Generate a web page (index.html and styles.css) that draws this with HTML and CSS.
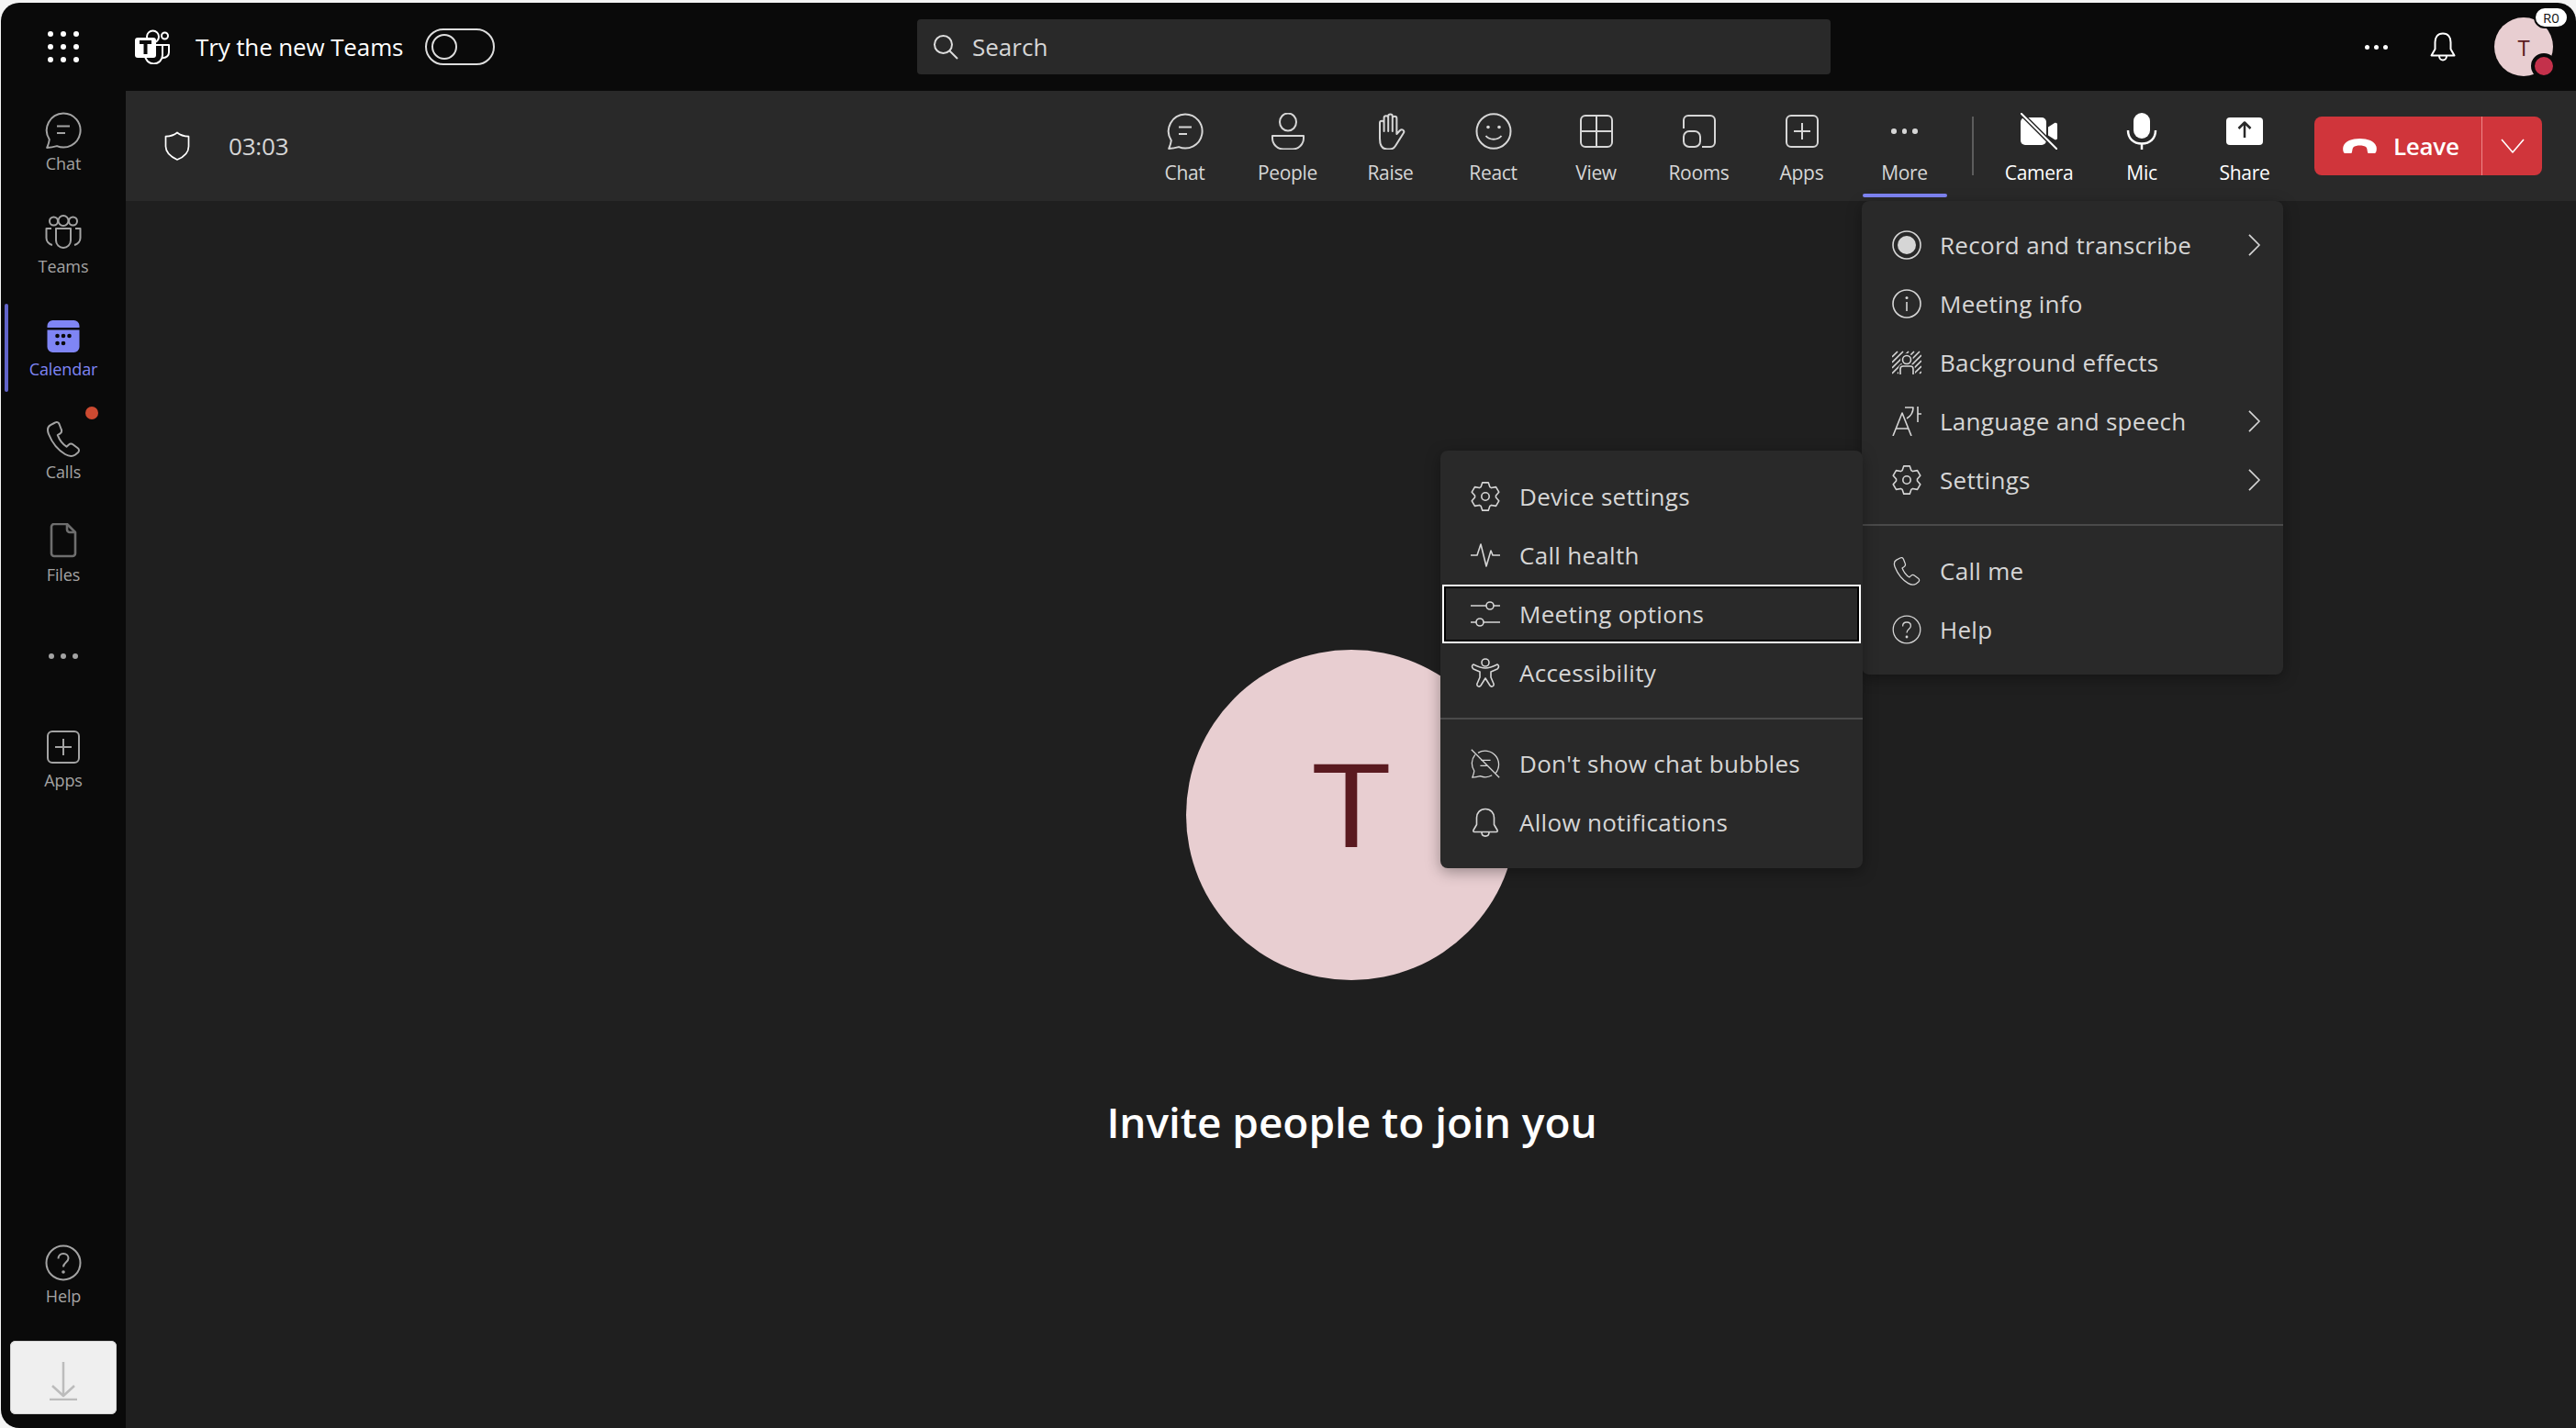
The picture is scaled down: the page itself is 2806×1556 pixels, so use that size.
FILE: index.html
```html
<!DOCTYPE html>
<html lang="en">
<head>
<meta charset="utf-8">
<title>Microsoft Teams meeting</title>
<link rel="stylesheet" href="styles.css">
</head>
<body>
<svg class="defs" width="0" height="0" aria-hidden="true">
  <defs>
    <symbol id="i-chat" viewBox="0 0 40 40"><path d="M20 1.500a18.500 18.500 0 1 1-7 35.600c-3.400 1-6.600 1.700-10.800 1.900 1.300-3 2.300-5.900 2.600-9A18.500 18.500 0 0 1 20 1.500z"/><path d="M13 15.500h14M13 23h9"/></symbol>
    <symbol id="i-people" viewBox="0 0 40 40"><ellipse cx="20" cy="10" rx="9" ry="9.500"/><path d="M3 25h34v2.500A12 12 0 0 1 25 39.500H15A12 12 0 0 1 3 27.500z"/></symbol>
    <symbol id="i-hand" viewBox="0 0 40 40"><path d="M8 28V11a2.300 2.300 0 0 1 4.600 0v9-14.500a2.300 2.300 0 0 1 4.600 0V20 3.700a2.300 2.300 0 0 1 4.600 0V20 6a2.300 2.300 0 0 1 4.600 0v17l3.500-3.800c2.300-2.400 5.600.2 3.900 2.800L25 36c-1.500 2.500-3 3.500-6 3.500h-3C10.500 39.500 8 35 8 28z"/></symbol>
    <symbol id="i-smile" viewBox="0 0 40 40"><ellipse cx="20" cy="20" rx="18.500" ry="18.800"/><path d="M11.500 25c4 5 13 5 17 0"/><circle class="fill" cx="14" cy="15.500" r="1.800"/><circle class="fill" cx="26" cy="15.500" r="1.800"/></symbol>
    <symbol id="i-grid" viewBox="0 0 40 40"><rect x="3" y="3" width="34" height="34" rx="5"/><path d="M20 3v34M3 20h34"/></symbol>
    <symbol id="i-rooms" viewBox="0 0 40 40"><path d="M3 17V8a5 5 0 0 1 5-5h24a5 5 0 0 1 5 5v24a5 5 0 0 1-5 5h-9"/><rect x="3" y="20" width="18" height="17" rx="6"/></symbol>
    <symbol id="i-plus" viewBox="0 0 40 40"><rect x="3" y="3" width="34" height="34" rx="5"/><path d="M20 11v18M11 20h18"/></symbol>
    <symbol id="i-phone" viewBox="0 0 40 40"><path d="M11 2.500 6 5.200C2.500 7 2.500 11 4 15c4 10 9.500 17 18 22 4 2.300 8 2.500 11 .5l3-2.500c1.500-1.500 1.300-3.500-.3-4.700l-5-3.800c-1.700-1.300-3.500-1.100-5 .2l-2.200 2c-4-2.500-8-8-9.700-12.500l2.700-1.800c1.700-1.200 2-3 1.100-4.900L15.500 4c-.9-1.900-2.700-2.500-4.500-1.500z"/></symbol>
    <symbol id="i-help" viewBox="0 0 40 40"><circle cx="20" cy="20" r="18.500"/><path d="M14.500 15.500c0-3.500 2.500-5.500 5.500-5.500 3.300 0 5.500 2.200 5.500 5 0 4.500-5.500 4.500-5.500 9.500"/><circle class="fill" cx="20" cy="30" r="1.800"/></symbol>
    <symbol id="i-gear" viewBox="0 0 32 32"><polygon points="11.140,5.580 12.780,.84 19.220,.84 20.860,5.580 22.600,6.580 27.520,5.630 30.740,11.210 27.460,15 27.460,17 30.740,20.790 27.520,26.370 22.600,25.420 20.860,26.420 19.220,31.160 12.780,31.160 11.140,26.420 9.400,25.420 4.480,26.370 1.260,20.790 4.540,17 4.540,15 1.260,11.210 4.480,5.630 9.400,6.580"/><circle cx="16" cy="16" r="4.200"/></symbol>
    <symbol id="i-chev" viewBox="0 0 14 26"><path d="M1 1l12 12L1 25"/></symbol>
  </defs>
</svg>

<div class="window">
  <header class="topbar">
    <div class="top-left">
      <div class="waffle" aria-label="App launcher">
        <i></i><i></i><i></i><i></i><i></i><i></i><i></i><i></i><i></i>
      </div>
      <svg class="logo" viewBox="0 0 38 38">
        <circle class="lg-s" cx="19.500" cy="8" r="6.500"/>
        <circle class="lg-s" cx="32.500" cy="7" r="3.500"/>
        <path class="lg-s" d="M27 17h10v8a6 6 0 0 1-6 6h-2"/>
        <path class="lg-s" d="M10 17h20v11a9.500 9.500 0 0 1-19 0z"/>
        <rect class="lg-f" x="0" y="9" width="23" height="22" rx="3"/>
        <path class="lg-t" d="M5 14h13M11.500 14v13"/>
      </svg>
      <span class="try">Try the new Teams</span>
      <span class="toggle"><i></i></span>
    </div>
    <div class="search">
      <svg class="search-ic" viewBox="0 0 28 28"><circle cx="11.500" cy="11.500" r="9.500"/><path d="M18.500 18.500l8.500 8.500"/></svg>
      <span>Search</span>
    </div>
    <div class="top-right">
      <span class="dots dots-w"><i></i><i></i><i></i></span>
      <svg class="bell-top" viewBox="0 0 28 32"><path d="M14 1.500C8 1.500 5.500 6 5.500 11v7.500L1.500 25.500h25l-4-7V11c0-5-2.500-9.500-8.500-9.500z"/><path d="M10 26c0 6 8 6 8 0"/></svg>
      <div class="me">
        <span class="me-face">T</span>
        <span class="me-tag">R0</span>
        <span class="me-status"></span>
      </div>
    </div>
  </header>

  <nav class="rail">
    <a class="rail-item"><svg class="ic"><use href="#i-chat"/></svg><span>Chat</span></a>
    <a class="rail-item"><svg class="ic" viewBox="0 0 40 40"><circle cx="9.500" cy="7" r="4.500"/><circle cx="20" cy="6.500" r="5.500"/><circle cx="30.500" cy="7" r="4.500"/><path d="M12 15h16v13a8 8 0 0 1-16 0z"/><path d="M7 15H1.500v10A8 8 0 0 0 8 33M33 15h5.500v10A8 8 0 0 1 32 33"/></svg><span>Teams</span></a>
    <a class="rail-item is-active"><svg class="ic" viewBox="0 0 40 40"><path class="cal" d="M2.500 9a6 6 0 0 1 6-6h23a6 6 0 0 1 6 6v2h-35zM2.500 13.500h35V32a6 6 0 0 1-6 6h-23a6 6 0 0 1-6-6z"/><circle class="cal-d" cx="13.500" cy="20" r="2.300"/><circle class="cal-d" cx="20" cy="20" r="2.300"/><circle class="cal-d" cx="26.500" cy="20" r="2.300"/><circle class="cal-d" cx="13.500" cy="28" r="2.300"/><circle class="cal-d" cx="20" cy="28" r="2.300"/></svg><span>Calendar</span></a>
    <a class="rail-item"><i class="rail-dot"></i><svg class="ic"><use href="#i-phone"/></svg><span>Calls</span></a>
    <a class="rail-item"><svg class="ic" viewBox="0 0 40 40"><path class="dim" d="M7 4a3 3 0 0 1 3-3h14l9 9v23a3 3 0 0 1-3 3H10a3 3 0 0 1-3-3z"/><path class="dim" d="M24 1v6a3 3 0 0 0 3 3h6"/></svg><span>Files</span></a>
    <a class="rail-item rail-more"><span class="dots dots-g"><i></i><i></i><i></i></span></a>
    <a class="rail-item"><svg class="ic"><use href="#i-plus"/></svg><span>Apps</span></a>
    <a class="rail-item rail-help"><svg class="ic"><use href="#i-help"/></svg><span>Help</span></a>
    <div class="download"><svg viewBox="0 0 30 42"><path d="M15 0v37M3 26l12 11 12-11M0 41h30"/></svg></div>
  </nav>

  <main class="main">
    <div class="meetbar">
      <svg class="shield" viewBox="0 0 28 32"><path d="M14 1.500c3 2.500 7.500 4 12.500 4.200v10.800c0 7-5 11.500-12.500 14.500C6.500 27.500 1.500 23.500 1.500 16.500V5.700C6.500 5.500 11 4 14 1.500z"/></svg>
      <span class="timer">03:03</span>
      <div class="tools">
        <a class="tool"><svg class="ic"><use href="#i-chat"/></svg><span>Chat</span></a>
        <a class="tool"><svg class="ic"><use href="#i-people"/></svg><span>People</span></a>
        <a class="tool"><svg class="ic"><use href="#i-hand"/></svg><span>Raise</span></a>
        <a class="tool"><svg class="ic"><use href="#i-smile"/></svg><span>React</span></a>
        <a class="tool"><svg class="ic"><use href="#i-grid"/></svg><span>View</span></a>
        <a class="tool"><svg class="ic"><use href="#i-rooms"/></svg><span>Rooms</span></a>
        <a class="tool"><svg class="ic"><use href="#i-plus"/></svg><span>Apps</span></a>
        <a class="tool tool-on"><span class="ic-box"><span class="dots dots-l"><i></i><i></i><i></i></span></span><span>More</span></a>
        <span class="tool-sep"></span>
        <a class="tool tool-w"><svg class="ic" viewBox="0 0 40 40"><rect class="w" x="0" y="5" width="28" height="30" rx="5"/><path class="w" d="M30 15.500l7-4.500c1.300-.8 3-.1 3 1.500v15c0 1.600-1.700 2.300-3 1.500l-7-4.500z"/><path class="slash-b" d="M0 0l40 40"/><path class="slash-w" d="M0 0l40 40"/></svg><span>Camera</span></a>
        <a class="tool tool-w"><svg class="ic" viewBox="0 0 40 40"><rect class="w" x="11" y="0" width="18" height="28" rx="9"/><path class="st-w" d="M5 19c0 9 6 14.500 15 14.500S35 28 35 19M20 33v7"/></svg><span>Mic</span></a>
        <a class="tool tool-w"><svg class="ic" viewBox="0 0 40 40"><rect class="w" x="0" y="5" width="40" height="30" rx="4"/><path class="st-d" d="M20 27V11M13.500 17L20 10.500 26.500 17"/></svg><span>Share</span></a>
      </div>
      <div class="leave">
        <div class="leave-main">
          <svg viewBox="0 0 40 18"><path d="M20 0C11 0 3 3 1 9c-.8 2.600-.4 7 1.500 8h7.700c1.200-.6 1-5.500 2.300-7 1.500-1.500 5-2 7.500-2s6 .5 7.500 2c1.300 1.500 1.100 6.400 2.300 7h7.700c1.900-1 2.300-5.400 1.500-8C37 3 29 0 20 0z"/></svg>
          <span>Leave</span>
        </div>
        <div class="leave-arrow"><svg viewBox="0 0 26 16"><path d="M1 1l12 14L25 1"/></svg></div>
      </div>
    </div>

    <section class="stage">
      <div class="bigface"><span class="bigface-t">T</span></div>
      <h1 class="invite">Invite people to join you</h1>
    </section>

    <div class="menu menu-more">
      <a class="mi"><svg class="mic" viewBox="0 0 32 32"><circle cx="16" cy="16" r="15"/><circle class="fill" cx="16" cy="16" r="10"/></svg><span>Record and transcribe</span><svg class="chev"><use href="#i-chev"/></svg></a>
      <a class="mi"><svg class="mic" viewBox="0 0 32 32"><circle cx="16" cy="16" r="15"/><path d="M16 14v10"/><circle class="fill" cx="16" cy="9.500" r="1.500"/></svg><span>Meeting info</span></a>
      <a class="mi"><svg class="mic" viewBox="0 0 32 24"><path d="M0 6 6 0M0 12 12 0M0 18 18 0M0 24 24 0M6 24 30 0M12 24 32 4M18 24 32 10M24 24 32 16M30 24 32 22"/><path class="halo" d="M16 3.500a5.500 5.500 0 1 1 0 11 5.500 5.500 0 0 1 0-11zM8.500 24v-5.500a3 3 0 0 1 3-3h9a3 3 0 0 1 3 3V24z"/><circle class="bgf" cx="16" cy="9" r="4.500"/><path class="bgf" d="M9 25v-6a3 3 0 0 1 3-3h8a3 3 0 0 1 3 3v6"/></svg><span>Background effects</span></a>
      <a class="mi"><svg class="mic" viewBox="0 0 32 32"><path d="M1 32 11 7l10 25M4.500 24h13"/><path d="M14 1h9c0 5-2 9-7 12M28 0v17M28 8h4"/></svg><span>Language and speech</span><svg class="chev"><use href="#i-chev"/></svg></a>
      <a class="mi"><svg class="mic"><use href="#i-gear"/></svg><span>Settings</span><svg class="chev"><use href="#i-chev"/></svg></a>
      <hr class="sep">
      <a class="mi"><svg class="mic"><use href="#i-phone"/></svg><span>Call me</span></a>
      <a class="mi"><svg class="mic"><use href="#i-help"/></svg><span>Help</span></a>
    </div>

    <div class="menu menu-sub">
      <a class="mi"><svg class="mic"><use href="#i-gear"/></svg><span>Device settings</span></a>
      <a class="mi"><svg class="mic" viewBox="0 0 32 32"><path d="M0 16h7l4-12 6 24 5-17 2 5h8"/></svg><span>Call health</span></a>
      <a class="mi mi-focus"><svg class="mic" viewBox="0 0 32 32"><path d="M0 7h17M25 7h7M0 25h6M14 25h18"/><circle cx="21" cy="7" r="4"/><circle cx="10" cy="25" r="4"/></svg><span>Meeting options</span></a>
      <a class="mi"><svg class="mic" viewBox="0 0 32 32"><circle cx="16" cy="5" r="4"/><path d="M3 7c-2 1-2 3 0 5l7 3v6l-3 7c-.8 3 2.500 4 4 2l5-8 5 8c1.500 2 4.800 1 4-2l-3-7v-6l7-3c2-2 2-4 0-5-4 2-8 4-13 4S7 9 3 7z"/></svg><span>Accessibility</span></a>
      <hr class="sep">
      <a class="mi"><svg class="mic" viewBox="0 0 40 40"><path d="M10 5.500A18.500 18.500 0 0 1 34 33M29 36a18.500 18.500 0 0 1-16 1.100c-3.400 1-6.600 1.700-10.800 1.900 1.300-3 2.300-5.900 2.600-9A18.500 18.500 0 0 1 6 8"/><path d="M14 15.500h13M13 23h9M1 1l38 38"/></svg><span>Don't show chat bubbles</span></a>
      <a class="mi"><svg class="mic" viewBox="0 0 28 32"><path d="M14 1.500C8 1.500 4.500 6 4.500 11v7.500L1 24.500c-.5 1 0 2 1 2h24c1 0 1.500-1 1-2l-3.500-6V11c0-5-3.500-9.500-9.500-9.500z"/><path d="M10 27c0 5.500 8 5.500 8 0"/></svg><span>Allow notifications</span></a>
    </div>
  </main>
</div>
</body>
</html>
```

FILE: styles.css
```css
* { box-sizing: border-box; }
html, body { margin: 0; height: 100%; }
body {
  background: #f4f4f4;
  overflow: hidden;
  font-family: "Open Sans", "Noto Sans", "Liberation Sans", sans-serif;
  color: #d6d6d6;
}
.defs { position: absolute; }
i { display: block; }
svg { display: block; fill: none; stroke-linejoin: round; }
.ic, .mic, .chev {
  fill: none;
  stroke: currentColor;
}

.window {
  margin: 3px 0 0 1px;
  height: 1553px;
  display: grid;
  grid-template-columns: 136px 1fr;
  grid-template-rows: 96px 1fr;
  background: #0a0a0a;
  border-radius: 20px 20px 0 20px;
  overflow: hidden;
}

/* top bar */
.topbar {
  grid-column: 1 / 3;
  display: grid;
  grid-template-columns: 998px 995px 1fr;
  align-items: center;
}
.top-left { display: flex; align-items: center; }
.waffle {
  width: 34px;
  margin-left: 51px;
  display: grid;
  grid-template-columns: repeat(3, 6px);
  gap: 8px;
}
.waffle i { width: 6px; height: 6px; border-radius: 50%; background: #fff; }
.logo { width: 38px; height: 38px; margin-left: 61px; }
.lg-s { stroke: #fff; stroke-width: 2; }
.lg-f { fill: #fff; stroke: none; }
.lg-t { stroke: #0a0a0a; stroke-width: 4; }
.try { margin-left: 28px; font-size: 26px; letter-spacing: -.13px; color: #fff; }
.toggle {
  width: 76px; height: 40px; margin-left: 24px;
  border: 2px solid #ddd; border-radius: 20px;
  display: flex; align-items: center; padding-left: 5px;
}
.toggle i { width: 28px; height: 28px; border: 2px solid #ddd; border-radius: 50%; }
.search {
  height: 60px;
  background: #292929;
  border-radius: 4px;
  display: flex; align-items: center;
  padding-left: 17px; gap: 15px;
  font-size: 26px; letter-spacing: 0; color: #d6d6d6;
}
.search-ic { width: 28px; height: 28px; stroke: #ddd; stroke-width: 2; }
.top-right { display: flex; align-items: center; }
.dots { display: flex; }
.dots i { border-radius: 50%; }
.dots-w { gap: 5px; margin-left: 582px; }
.dots-w i { width: 5px; height: 5px; background: #fff; }
.bell-top { width: 28px; height: 32px; margin-left: 46px; stroke: #fff; stroke-width: 2; }
.me { position: relative; width: 64px; height: 64px; margin-left: 42px; }
.me-face {
  width: 64px; height: 64px; border-radius: 50%;
  background: #e8ced1; color: #5a1a20;
  display: flex; align-items: center; justify-content: center;
  font-size: 24px;
}
.me-tag {
  position: absolute; left: 43px; top: -12px;
  width: 38px; height: 24px;
  background: #fff; color: #111; border: 2px solid #0a0a0a; border-radius: 12px;
  font-size: 15px; line-height: 20px; text-align: center;
}
.me-status {
  position: absolute; left: 40px; top: 39px;
  width: 28px; height: 28px; border-radius: 50%;
  background: #c4314b; border: 4px solid #0a0a0a;
}

/* left rail */
.rail {
  display: flex; flex-direction: column; align-items: stretch;
  gap: 16px;
  padding: 8px 0 15px;
}
.rail-item {
  position: relative;
  height: 96px;
  padding-top: 15px;
  display: flex; flex-direction: column; align-items: center;
  color: #a3a3a3;
  font-size: 18px; letter-spacing: -.1px; line-height: 22px;
}
.rail-item .ic { width: 40px; height: 40px; stroke-width: 2; margin-bottom: 5px; stroke: #a3a3a3; }
.rail-item .dim { stroke: #6e6e6e; stroke-width: 2.600; }
.rail-item.is-active { color: #7f85f5; }
.rail-item.is-active::before {
  content: ""; position: absolute; left: 4px; top: 0;
  width: 4px; height: 96px; border-radius: 2px; background: #6264c9;
}
.cal { fill: #7f85f5; stroke: none; }
.cal-d { fill: #0a0a0a; stroke: none; }
.rail-dot {
  position: absolute; left: 92px; top: 0;
  width: 14px; height: 14px; border-radius: 50%; background: #cc4a31;
}
.rail-more { justify-content: center; padding-top: 0; }
.dots-g { gap: 7px; }
.dots-g i { width: 6px; height: 6px; background: #a3a3a3; }
.rail-help { margin-top: auto; }
.download {
  width: 116px; height: 80px; margin: 8px 0 0 10px;
  background: #efefef; border-radius: 6px;
  box-shadow: inset 0 0 0 1px #d4d4d4;
  display: flex; align-items: center; justify-content: center;
}
.download svg { width: 30px; height: 42px; margin-top: 8px; stroke: #bcbcbc; stroke-width: 2.500; }

/* main */
.main { position: relative; background: #1f1f1f; min-width: 0; }
.meetbar {
  height: 120px;
  background: #292929;
  display: flex; align-items: center;
  padding: 0 37px 0 42px;
}
.shield { width: 28px; height: 32px; stroke: #fff; stroke-width: 1.700; }
.timer { margin-left: 42px; font-size: 26px; letter-spacing: -.2px; color: #d6d6d6; }
.tools { display: flex; margin-left: auto; margin-right: 20px; height: 100%; }
.tool {
  position: relative;
  width: 112px;
  padding-top: 24px;
  display: flex; flex-direction: column; align-items: center;
  font-size: 21px; letter-spacing: -.3px; line-height: 21px;
  color: #d6d6d6;
}
.tool .ic, .ic-box { width: 40px; height: 40px; margin-bottom: 15px; stroke-width: 2; }
.ic-box { display: flex; align-items: center; justify-content: center; }
.dots-l { gap: 6px; }
.dots-l i { width: 5.500px; height: 5.500px; background: #d6d6d6; }
.tool-on::after {
  content: ""; position: absolute; left: 10px; right: 10px; top: 112px;
  height: 4px; border-radius: 2px; background: #7f85f5;
}
.tool-w { color: #fff; }
.w { fill: #fff; stroke: none; }
.slash-b { stroke: #292929; stroke-width: 5; }
.slash-w { stroke: #fff; stroke-width: 2; }
.st-w { stroke: #fff; stroke-width: 2.500; fill: none; }
.st-d { stroke: #292929; stroke-width: 2.500; fill: none; }
.fill { fill: currentColor; stroke: none; }
.tool-sep { width: 2px; height: 64px; margin: 28px 15.500px 0 17px; background: #5c5c5c; }

.leave {
  width: 248px; height: 64px;
  display: flex;
  background: #d0353b;
  border-radius: 8px;
  color: #fff;
}
.leave-main {
  width: 183px;
  display: flex; align-items: center;
  padding-left: 30px; gap: 17px;
  border-right: 1px solid #e88;
  font-size: 26px; font-weight: 600; letter-spacing: -.3px;
}
.leave-main svg { width: 39px; height: 17px; fill: #fff; }
.leave-arrow { flex: 1; display: flex; align-items: center; justify-content: center; }
.leave-arrow svg { width: 26px; height: 16px; stroke: #fff; stroke-width: 1.600; }

/* stage */
.stage {
  display: flex; flex-direction: column; align-items: center;
  padding-top: 489px;
}
.bigface {
  width: 360px; height: 360px; border-radius: 50%;
  background: #e8ced1; color: #5a1a20;
  display: flex; align-items: center; justify-content: center;
  padding-bottom: 30px;
  font-size: 127px; font-weight: 400; line-height: 1;
}
.bigface-t { display: block; transform: scaleX(1.2); }
.invite {
  margin: 124px 0 0 2px;
  font-size: 46px; font-weight: 600; line-height: 60px; letter-spacing: -.05px;
  color: #fff;
}

/* menus */
.menu {
  position: absolute;
  background: #292929;
  border-radius: 8px;
  box-shadow: 0 4px 16px rgba(0, 0, 0, .35);
  font-size: 26px; letter-spacing: .3px;
  color: #d6d6d6;
}
.menu-more { left: 1891px; top: 120px; width: 459px; padding: 16px 0 17px; }
.menu-sub { left: 1432px; top: 392px; width: 460px; padding: 18px 0 18px; }
.mi {
  display: flex; align-items: center;
  height: 64px;
  padding: 0 25px 0 33px;
  gap: 20px;
}
.menu-sub .mi { gap: 21px; }
.menu-sub .sep { margin: 17px 0 16px; }
.mic { width: 32px; height: 32px; flex: none; stroke-width: 1.600; }
.bgf { fill: #292929; }
.halo { fill: #292929; stroke: #292929; stroke-width: 3; }
.chev { width: 13px; height: 24px; margin-left: auto; stroke-width: 1.800; }
.sep { margin: 16px 0 17px; border: 0; height: 2px; background: #4a4a4a; }
.mi-focus {
  margin: 0 2px;
  padding-left: 31px;
  background: #292929;
  box-shadow: inset 0 0 0 2px #fff, inset 0 0 0 4px #000;
}
```
